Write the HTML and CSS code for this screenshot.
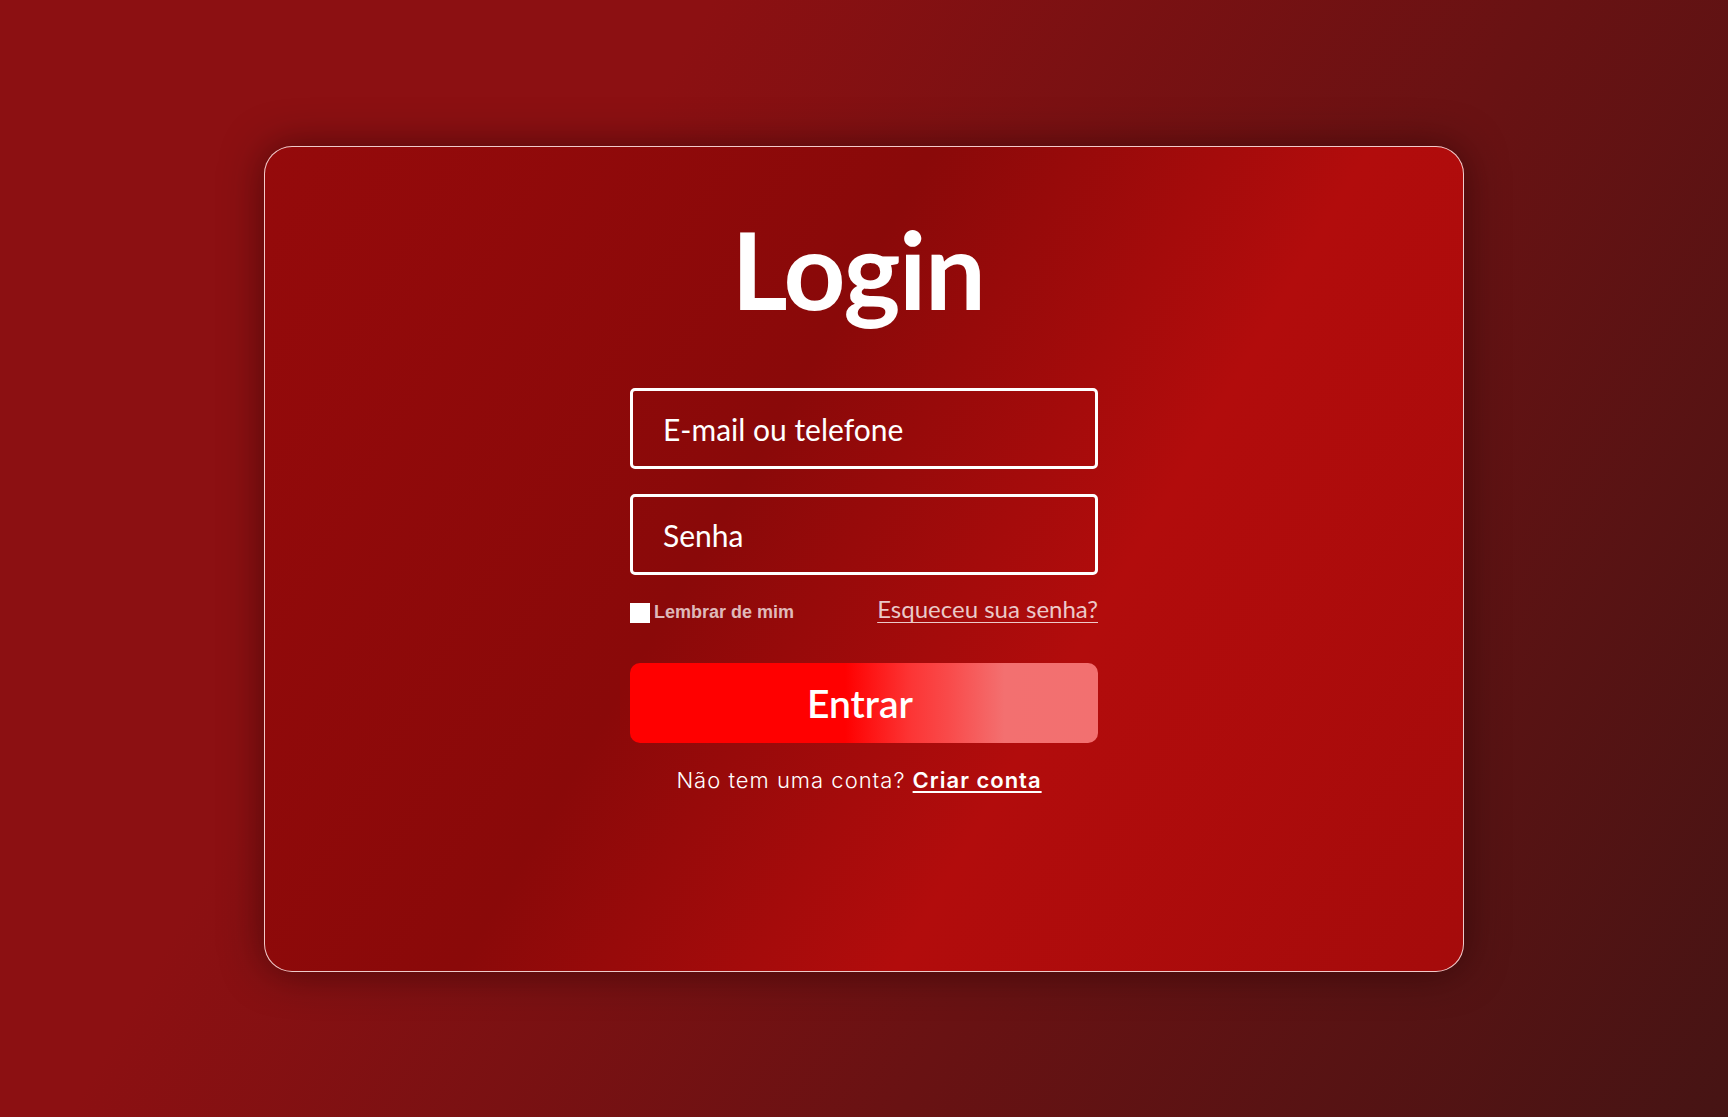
FILE: index.html
```html
<!DOCTYPE html>
<html lang="pt-BR">
<head>
<meta charset="utf-8">
<title>Login</title>
<link rel="stylesheet" href="styles.css">
</head>
<body>
<main class="card">
  <h1 class="title">Login</h1>
  <form class="form">
    <input class="field" type="text" placeholder="E-mail ou telefone">
    <input class="field field-second" type="password" placeholder="Senha">
    <div class="options">
      <label class="remember"><span class="box"></span>Lembrar de mim</label>
      <a class="forgot" href="#">Esqueceu sua senha?</a>
    </div>
    <button class="submit" type="button">Entrar</button>
    <p class="signup">Não tem uma conta? <a href="#">Criar conta</a></p>
  </form>
</main>
</body>
</html>
```
FILE: styles.css
```css
html, body {
  margin: 0;
  padding: 0;
  height: 100%;
}
body {
  min-height: 100vh;
  display: flex;
  align-items: center;
  justify-content: center;
  background: linear-gradient(120deg, #8c1012 30%, #461414 100%);
  font-family: Lato, "Liberation Sans", sans-serif;
}
.card {
  box-sizing: border-box;
  width: 1200px;
  height: 826px;
  margin-top: 1px;
  border: 1px solid rgba(255, 235, 235, 0.85);
  border-radius: 28px;
  background: linear-gradient(120deg, #950a0b 0%, #8a0909 40%, #b20c0c 66%, #a50b0b 100%);
  box-shadow: 0 0 40px rgba(30, 0, 0, 0.55);
  display: flex;
  flex-direction: column;
  align-items: center;
  padding-top: 57px;
}
.title {
  margin: 0;
  padding-right: 12px;
  font-family: Lato, sans-serif;
  font-weight: 700;
  font-size: 108px;
  line-height: 129px;
  color: #fff;
  letter-spacing: -1.5px;
}
.form {
  width: 468px;
  display: flex;
  flex-direction: column;
  margin-top: 55px;
}
.field {
  box-sizing: border-box;
  width: 100%;
  height: 81px;
  border: 3px solid #fff;
  border-radius: 5px;
  background: transparent;
  padding: 0 30px;
  font-family: Lato, sans-serif;
  font-size: 30px;
  color: #fff;
  outline: none;
}
.field::placeholder {
  color: #fff;
  opacity: 1;
}
.field-second {
  margin-top: 25px;
}
.options {
  display: flex;
  justify-content: space-between;
  align-items: flex-end;
  margin-top: 19px;
  height: 29px;
}
.remember {
  display: flex;
  align-items: center;
  gap: 4px;
  font-family: "Liberation Sans", Arial, sans-serif;
  font-weight: 700;
  font-size: 18px;
  color: rgba(255, 255, 255, 0.72);
  height: 21px;
}
.box {
  width: 20px;
  height: 20px;
  background: #fff;
  display: inline-block;
}
.forgot {
  font-family: Lato, sans-serif;
  font-size: 24px;
  line-height: 29px;
  color: rgba(255, 255, 255, 0.78);
  text-decoration: underline;
  text-underline-offset: 4px;
  text-decoration-thickness: 1px;
}
.submit {
  margin-top: 40px;
  height: 80px;
  padding: 0 8px 0 0;
  border: none;
  border-radius: 10px;
  background: linear-gradient(90deg, #ff0000 46%, #fc3535 60%, #f94a4a 68%, #f37070 80%, #f27070 100%);
  color: #fff;
  font-family: Lato, sans-serif;
  font-weight: 600;
  font-size: 39px;
  cursor: pointer;
}
.signup {
  margin: 24px 0 0;
  padding-right: 10px;
  text-align: center;
  font-family: Inter, sans-serif;
  font-weight: 300;
  font-size: 22px;
  letter-spacing: 1px;
  color: #fff;
}
.signup a {
  color: #fff;
  font-weight: 600;
  text-decoration: underline;
  text-underline-offset: 3px;
}
```
